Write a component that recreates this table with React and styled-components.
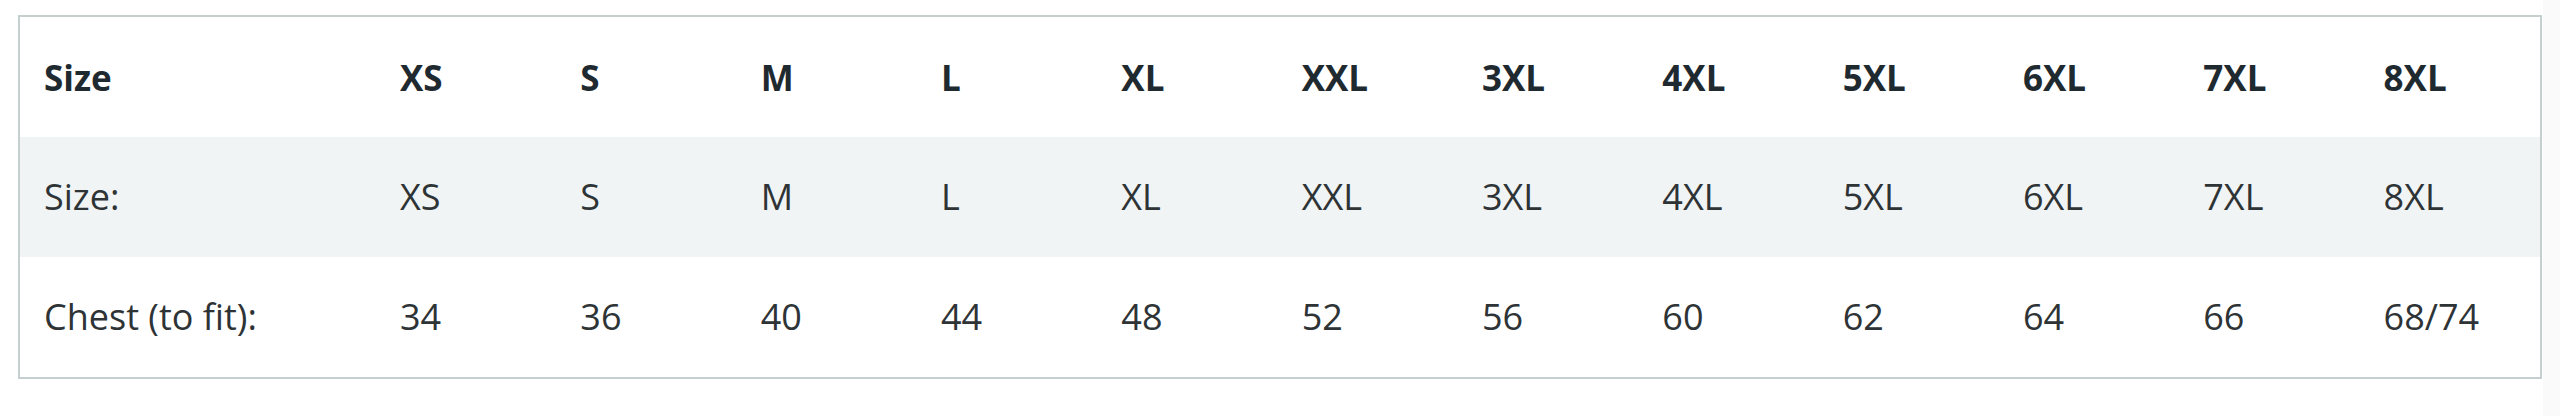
import React from "react";
import styled, { createGlobalStyle } from "styled-components";

const GlobalStyle = createGlobalStyle`
  html, body {
    margin: 0;
    padding: 0;
    background: #ffffff;
  }
  body {
    font-family: "Open Sans", "Liberation Sans", sans-serif;
  }
`;

const Page = styled.div`
  padding: 15px 17px 0 18px;
  background: linear-gradient(to right, #ffffff 2543px, #fafafa 2543px);
  height: 416px;
  box-sizing: border-box;
`;

const Frame = styled.div`
  border: 2px solid #c5cfcf;
  width: 2524px;
  box-sizing: border-box;
  background: #ffffff;
`;

const Table = styled.table`
  width: 100%;
  border-collapse: collapse;
  table-layout: fixed;
`;

const Row = styled.tr`
  height: 120px;
  background: ${(p) => (p.$shaded ? "#f1f4f5" : "#ffffff")};
`;

const Cell = styled.td`
  box-sizing: border-box;
  padding: 0 0 0 24px;
  font-size: ${(p) => (p.$head ? "35px" : "36px")};
  line-height: 1;
  text-align: left;
  vertical-align: middle;
  white-space: nowrap;
  color: ${(p) => (p.$head ? "#1f2a30" : "#2e3336")};
  font-weight: ${(p) => (p.$head ? 700 : 400)};
  width: ${(p) => (p.$first ? "356px" : "auto")};
`;

const sizes = ["XS", "S", "M", "L", "XL", "XXL", "3XL", "4XL", "5XL", "6XL", "7XL", "8XL"];
const chest = ["34", "36", "40", "44", "48", "52", "56", "60", "62", "64", "66", "68/74"];

const rows = [
  { label: "Size", values: sizes, head: true },
  { label: "Size:", values: sizes, shaded: true },
  { label: "Chest (to fit):", values: chest },
];

export default function App() {
  return (
    <>
      <GlobalStyle />
      <Page>
        <Frame>
          <Table>
            <tbody>
              {rows.map((r) => (
                <Row key={r.label} $shaded={r.shaded}>
                  <Cell $head={r.head} $first>
                    {r.label}
                  </Cell>
                  {r.values.map((v, i) => (
                    <Cell key={i} $head={r.head}>
                      {v}
                    </Cell>
                  ))}
                </Row>
              ))}
            </tbody>
          </Table>
        </Frame>
      </Page>
    </>
  );
}
